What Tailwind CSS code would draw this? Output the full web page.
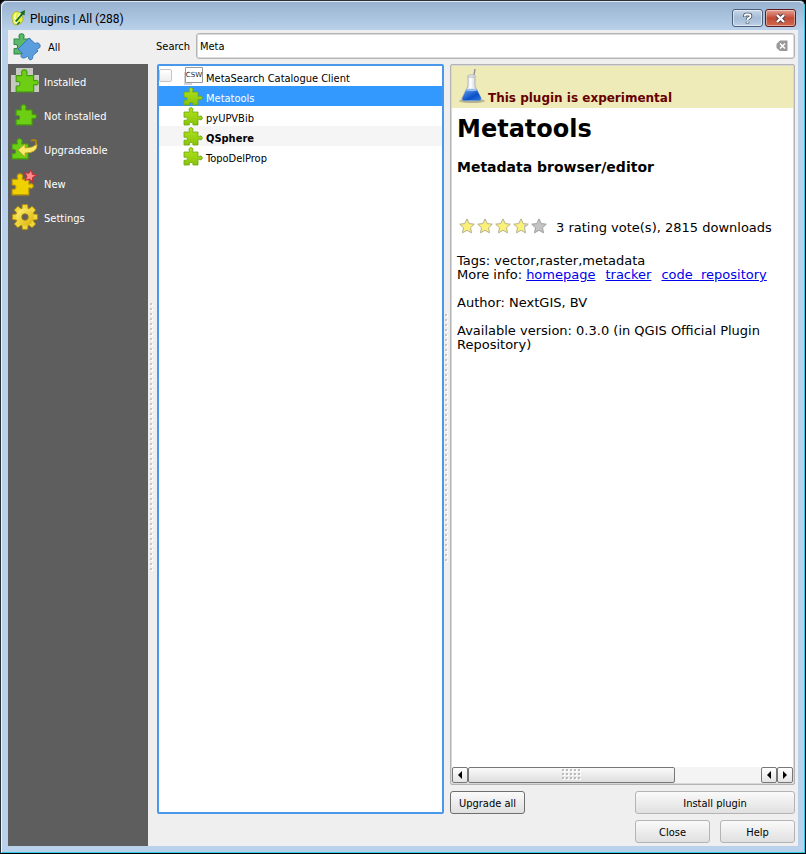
<!DOCTYPE html>
<html lang="en">
<head>
<meta charset="utf-8">
<meta name="viewport" content="width=device-width, initial-scale=1">
<title>Plugins | All (288)</title>
<script src="https://cdn.jsdelivr.net/npm/@tailwindcss/browser@4"></script>
</head>
<body class="h-screen bg-black text-black font-['DejaVu_Sans_Condensed','DejaVu_Sans',sans-serif] text-[11px] leading-4">
<!-- Shared shapes -->
<svg class="absolute size-0" aria-hidden="true">
  <defs>
    <linearGradient id="lime" x1="0" y1="0" x2="0" y2="1"><stop offset="0" stop-color="#b2e41c"/><stop offset="1" stop-color="#86c40a"/></linearGradient>
    <linearGradient id="gold" x1="0" y1="0" x2="1" y2="1"><stop offset="0" stop-color="#fff27a"/><stop offset="1" stop-color="#d9b000"/></linearGradient>
    <linearGradient id="glass" x1="0" y1="0" x2="1" y2="0"><stop offset="0" stop-color="#a9b0b4"/><stop offset=".45" stop-color="#ffffff"/><stop offset="1" stop-color="#9ea6aa"/></linearGradient>
    <linearGradient id="liquid" x1="0" y1="0" x2="1" y2="1"><stop offset="0" stop-color="#5fa0f0"/><stop offset=".6" stop-color="#0b50c8"/><stop offset="1" stop-color="#2f7be0"/></linearGradient>
    <pattern id="grip" width="4" height="5" patternUnits="userSpaceOnUse"><path d="M1 1h2v2h-2z" fill="#fff"/><path d="M0 0h2v2h-2z" fill="#c6c6c6"/></pattern>
    <pattern id="thumb" width="4" height="4" patternUnits="userSpaceOnUse"><path d="M1 1h2v2h-2z" fill="#fff"/><path d="M0 0h2v2h-2z" fill="#bbb"/></pattern>
    <path id="piece" d="M1 5H6.500C7 4 5.600 3.600 6 2C6.400 .2 9.600 .2 10 2C10.400 3.600 9 4 9.500 5H15V9.500C16 10 16.400 8.700 18 9C19.800 9.500 19.800 12.300 18 12.800C16.400 13.100 16 11.800 15 12.300V18H10C9.300 17.300 10.400 16.800 9.700 16C9 15.200 7.300 15.200 6.600 16C5.900 16.800 7 17.300 6.300 18H1V13.300C2 12.900 2.500 13.600 3.600 13.100C4.600 12.500 4.600 11 3.600 10.400C2.500 9.900 2 10.600 1 10.200Z"/>
    <path id="block" d="M1 5.500H5.500C6.500 4.800 5 4 5.500 2.200C6 .2 9.500 .2 10 2.200C10.500 4 9 4.800 10 5.500H15.500V9.500C16.300 10.200 16.800 9.300 18 9.400C19.800 9.800 19.800 12.800 18 13.200C16.800 13.400 16.300 12.500 15.500 13.200V19H1V14.300C2 13.700 2.300 14.500 3.400 14C4.500 13.200 4.500 11.200 3.400 10.600C2.300 10.100 2 10.800 1 10.400Z"/>
    <path id="star" d="M8 .9L10.200 5.600L15.300 6.200L11.500 9.700L12.500 14.800L8 12.300L3.500 14.800L4.500 9.700L.7 6.200L5.800 5.600Z"/>
    <path id="tooth" d="M-3.300 -7L-2.600 -12.600H2.600L3.300 -7Z"/>
    <symbol id="plugin" viewBox="0 0 20 19"><use href="#piece" fill="url(#lime)" stroke="#6ea40c" stroke-width=".8"/></symbol>
  </defs>
</svg>

<div class="flex h-full flex-col rounded-t-md border-t border-l border-[#2b3138] bg-[#b9d1ea] border-b border-r border-b-black border-r-black">
<div class="flex min-h-0 flex-1 flex-col rounded-t-md border border-t-[#dfe8f2] border-l-[#eef4fa] border-r-[#2fc8e8] border-b-[#2fc8e8]">
  <header class="flex h-7 shrink-0 items-center rounded-t-md bg-linear-to-b from-[#98b2d0] to-[#b9d1ea] pl-2 pr-2">
    <svg class="mt-1 size-4 shrink-0" viewBox="0 0 16 16" aria-hidden="true">
      <path d="M8 1.500C4 1.500 2 4 2 7C2 9 3 9.500 2.500 12L4 14.500C8 15.500 12 14 13 10L12.500 6Z" fill="#e3ee3e" stroke="#9aa822" stroke-width=".7"/>
      <path d="M6 3L4.500 8L7 11M10 3L6 13M4 11L8 14" fill="none" stroke="#fbffe4" stroke-width="1.200"/>
      <path d="M5 11L11.500 3.500L10 2.500L15 0L14.500 5.500L13 4.500L6.500 12Z" fill="#176b21"/>
      <path d="M7 14.500L10 12" stroke="#176b21" stroke-width="1.500"/>
    </svg>
    <h1 class="ml-1 flex-1 pt-1.5 font-[Roboto,'Open_Sans',sans-serif] text-xs">Plugins | All (288)</h1>
    <div class="flex gap-0.5 pt-1">
      <button aria-label="What's this?" class="flex h-[18px] w-[31px] items-center justify-center rounded-[3px] border border-[#4b5f78] bg-linear-to-b from-[#c8d7e8] via-[#a5bcd6] to-[#bdd1e6] inset-ring inset-ring-white/50">
        <svg class="h-[13px] w-[11px]" viewBox="0 0 11 13" aria-hidden="true"><path d="M3 5V3.500Q3 2.500 4 2.500H7Q8.500 2.500 8.500 4T7 6Q5.500 6.500 5.500 8M5.500 9.700V11.500" fill="none" stroke="#485668" stroke-width="3.600"/><path d="M3 4.500V3.500Q3 2.500 4 2.500H7Q8.500 2.500 8.500 4T7 6Q5.500 6.500 5.500 8M5.500 9.700V11" fill="none" stroke="#fff" stroke-width="1.900"/></svg>
      </button>
      <button aria-label="Close window" class="flex h-[18px] w-[31px] items-center justify-center rounded-[3px] border border-[#5b1a1c] bg-linear-to-b from-[#e3a093] via-[#c34a35] to-[#cf6a50] inset-ring inset-ring-white/40">
        <svg class="h-[11px] w-[13px]" viewBox="0 0 13 11" aria-hidden="true"><path d="M3 2L10 9M10 2L3 9" stroke="#533b40" stroke-width="4.200"/><path d="M3 2L10 9M10 2L3 9" stroke="#fff" stroke-width="2.400"/></svg>
      </button>
    </div>
  </header>

  <div class="mx-1.5 mb-1.5 flex min-h-0 flex-1 bg-[#efefef]">
    <nav class="flex w-[140px] shrink-0 flex-col text-white" aria-label="Categories">
      <a href="#all" aria-current="page" class="flex h-[34px] items-center gap-[7px] pl-[5px] text-black">
        <svg class="size-7 shrink-0" viewBox="0 0 28 28" aria-hidden="true"><g transform="translate(0 0) scale(1.100)"><use href="#block" fill="#5cb96a" stroke="#2d8a4b"/></g><path d="M16 5L21.500 10C23 11 24 9 26 10.500C28 12.500 27 15 25.500 15.500C24 16 23.500 16 24 17L25 18L20.500 22C19.500 22.500 20 24 19.500 25.500C18.500 27.500 15.500 27 15.500 25C15.500 23.500 15 23 14 23.500C12 25.500 9 25.500 8 23.500C7.500 22 9.500 21.500 9 20L5 16Z" fill="#5c9ddd" stroke="#3878b8"/></svg>
        <span class="pt-0.5">All</span>
      </a>
      <div class="flex flex-1 flex-col bg-[#5e5e5e]">
        <a href="#installed" class="flex h-[34px] items-center gap-1 pl-[3px]">
          <svg class="h-7 w-[29px] shrink-0" viewBox="0 0 29 28" aria-hidden="true"><path d="M0 8H5V1H22V8H28V25H0Z" fill="#c6c8c2"/><g transform="translate(4 2) scale(1.200)"><use href="#block" fill="#6dcf13" stroke="#459d0c"/></g></svg>
          <span class="pt-1">Installed</span>
        </a>
        <a href="#not-installed" class="flex h-[34px] items-center gap-1 pl-[3px]">
          <svg class="h-7 w-[29px] shrink-0" viewBox="0 0 29 28" aria-hidden="true"><g transform="translate(4 3) scale(1.100)"><use href="#block" fill="#6dcf13" stroke="#459d0c"/></g></svg>
          <span class="pt-1">Not installed</span>
        </a>
        <a href="#upgradeable" class="flex h-[34px] items-center gap-1 pl-[3px]">
          <svg class="h-7 w-[29px] shrink-0" viewBox="0 0 29 28" aria-hidden="true"><g transform="translate(0 3) scale(1.100)"><use href="#block" fill="#6dcf13" stroke="#459d0c"/></g><path d="M20 6Q23 4 25 6V9" fill="none" stroke="#a98412" stroke-width="2"/><path d="M7 15L14 9V13Q22 13 26 9Q27 18 14 18V22Z" fill="#fbe96a" stroke="#b99a20" stroke-width=".8"/></svg>
          <span class="pt-1">Upgradeable</span>
        </a>
        <a href="#new" class="flex h-[34px] items-center gap-1 pl-[3px]">
          <svg class="h-7 w-[29px] shrink-0" viewBox="0 0 29 28" aria-hidden="true"><g transform="translate(0 4) scale(1.150)"><use href="#block" fill="#efd000" stroke="#bd9800"/></g><g transform="translate(12 0) rotate(12 8 8) scale(.85)"><use href="#star" fill="#ff8b8b" stroke="#bf3038" stroke-width="1.300"/></g></svg>
          <span class="pt-1">New</span>
        </a>
        <a href="#settings" class="flex h-[34px] items-center gap-1 pl-[3px]">
          <svg class="h-7 w-[29px] shrink-0" viewBox="0 0 29 28" aria-hidden="true">
            <g transform="translate(14 14)" fill="#f0d63c" stroke="#a98400" stroke-width=".8">
              <use href="#tooth"/><use href="#tooth" transform="rotate(45)"/><use href="#tooth" transform="rotate(90)"/><use href="#tooth" transform="rotate(135)"/><use href="#tooth" transform="rotate(180)"/><use href="#tooth" transform="rotate(225)"/><use href="#tooth" transform="rotate(270)"/><use href="#tooth" transform="rotate(315)"/>
              <circle r="8.800" fill="url(#gold)" stroke="none"/><circle r="3.300" fill="#5e5e5e"/>
            </g>
          </svg>
          <span class="pt-1">Settings</span>
        </a>
      </div>
    </nav>

    <!-- Splitter handle -->
    <div class="flex w-2 shrink-0 items-center justify-center" aria-hidden="true">
      <svg class="h-[270px] w-1"><rect width="4" height="270" fill="url(#grip)"/></svg>
    </div>

    <main class="flex min-w-0 flex-1 flex-col pr-[3px] pt-[3px]">
      <div class="flex items-center gap-1.5">
        <label for="search" class="pt-0.5">Search</label>
        <div class="flex h-[26px] flex-1 items-center rounded-[3px] border border-[#b4b4b4] bg-white pl-[3px] pr-1.5 inset-ring inset-ring-[#dcdcdc]">
          <input id="search" type="text" value="Meta" class="min-w-0 flex-1 pt-0.5 outline-none">
          <button aria-label="Clear search">
            <svg class="h-3 w-3" viewBox="0 0 12 12" aria-hidden="true"><path d="M4 .5H11.500V11H4L.5 8V4Z" fill="#999"/><path d="M4 3.500L9 8.500M9 3.500L4 8.500" stroke="#fff" stroke-width="1.500"/></svg>
          </button>
        </div>
      </div>

      <div class="mt-[5px] flex min-h-0 flex-1">
        <ul class="mb-8 ml-px flex w-[287px] shrink-0 flex-col rounded-xs border-2 border-[#4a98ec] bg-white" aria-label="Plugins">
          <li class="flex h-5 items-center">
            <input id="csw" type="checkbox" class="mb-px size-[13px] appearance-none rounded-xs border border-[#c4c4c4] bg-linear-to-b from-white to-[#eeeeee]">
            <svg class="ml-3 h-[18px] w-5 shrink-0" viewBox="0 0 20 18" aria-hidden="true"><path d="M1 5V17H8" fill="none" stroke="#d4d4d4" stroke-width="2"/><path d="M1.500 .5H18.500V15.500H1.500Z" fill="#fff" stroke="#9a9a9a"/><text x="10" y="10" text-anchor="middle" font-family="DejaVu Sans" font-size="7" fill="#222">CSW</text></svg>
            <label for="csw" class="ml-0.5 pt-1.5">MetaSearch Catalogue Client</label>
          </li>
          <li class="flex h-5 items-center gap-[3px] bg-[#3399ff] pl-6 text-white" aria-current="true"><svg class="h-[19px] w-5 shrink-0"><use href="#plugin"/></svg><span class="pt-1.5">Metatools</span></li>
          <li class="flex h-5 items-center gap-[3px] pl-6"><svg class="h-[19px] w-5 shrink-0"><use href="#plugin"/></svg><span class="pt-1.5">pyUPVBib</span></li>
          <li class="flex h-5 items-center gap-[3px] bg-[#f5f5f5] pl-6"><svg class="h-[19px] w-5 shrink-0"><use href="#plugin"/></svg><span class="pt-1.5 font-bold">QSphere</span></li>
          <li class="flex h-5 items-center gap-[3px] pl-6"><svg class="h-[19px] w-5 shrink-0"><use href="#plugin"/></svg><span class="pt-1.5">TopoDelProp</span></li>
        </ul>

        <div class="mb-8 flex w-1.5 shrink-0 items-center justify-center" aria-hidden="true">
          <svg class="h-[250px] w-1"><rect width="4" height="250" fill="url(#grip)"/></svg>
        </div>

        <section class="flex min-w-0 flex-1 flex-col">
          <article class="flex min-h-0 flex-1 flex-col rounded-xs border border-[#b4b4b4] bg-[#d8d8d8] p-px font-['DejaVu_Sans',sans-serif] text-[13px] leading-[14px]">
            <div class="flex h-[42px] shrink-0 items-end bg-[#eeebb8] pl-[5px] font-bold text-[#660000]">
              <svg class="mb-1 h-9 w-[30px] shrink-0" viewBox="0 0 30 36" aria-hidden="true">
                <ellipse cx="15" cy="33" rx="13" ry="2" fill="#77775f" opacity=".45"/>
                <path d="M16 13L18 1" stroke="#8f979a" stroke-width="1.500"/>
                <path d="M11 8H18L18 18L24 30Q25 33 22 33H7Q4 33 5 30L11 18Z" fill="url(#glass)" stroke="#9aa1a3" stroke-width=".7"/>
                <path d="M9 22H20L24 30Q24 32.500 22 32.500H7Q5 32.500 5.500 30Z" fill="url(#liquid)"/>
                <ellipse cx="14.500" cy="22" rx="5.500" ry="1.200" fill="#8fbcf2"/>
                <ellipse cx="14.500" cy="8" rx="4" ry="1.200" fill="#e4e8ea" stroke="#9aa1a3" stroke-width=".6"/>
              </svg>
              <p class="mb-0.5 ml-px text-xs">This plugin is experimental</p>
            </div>
            <div class="min-h-0 flex-1 overflow-hidden bg-white px-[5px]">
              <h2 class="mt-[5px] text-2xl font-bold">Metatools</h2>
              <h3 class="mt-3 text-sm font-bold">Metadata browser/editor</h3>
              <div class="mt-10 flex items-center gap-2">
                <svg class="ml-px h-[18px] w-[90px] shrink-0" viewBox="0 0 90 18" role="img" aria-label="Rating: 4 of 5">
                  <g fill="#fbf07a" stroke="#b4b08c"><use href="#star" x="1" y="1"/><use href="#star" x="19" y="1"/><use href="#star" x="37" y="1"/><use href="#star" x="55" y="1"/></g>
                  <path d="M66 7.500L70 7.800L66 11L67 15L66 14Z" fill="#c4c4c4"/>
                  <use href="#star" x="73" y="1" fill="#c4c4c4" stroke="#a0a0a0"/>
                </svg>
                <span class="whitespace-nowrap pt-1">3 rating vote(s), 2815 downloads</span>
              </div>
              <p class="mt-[19px]">Tags: vector,raster,metadata</p>
              <p class="flex whitespace-nowrap">More info:<a href="#homepage" class="ml-1 text-[#0000ee] underline">homepage</a><a href="#tracker" class="ml-2.5 text-[#0000ee] underline">tracker</a><a href="#repository" class="ml-2.5 whitespace-pre text-[#0000ee] underline">code  repository</a></p>
              <p class="mt-3.5">Author: NextGIS, BV</p>
              <p class="mt-3.5">Available version: 0.3.0 (in QGIS Official Plugin Repository)</p>
            </div>
            <!-- Horizontal scroll bar -->
            <div class="flex h-4 shrink-0 bg-[#f4f4f4]">
              <button aria-label="Scroll left" class="flex w-4 items-center justify-center rounded-xs border border-[#777] bg-linear-to-b from-white to-[#e4e4e4]"><svg class="h-2 w-1" viewBox="0 0 4 8"><path d="M4 0V8L0 4Z"/></svg></button>
              <div class="flex w-[207px] shrink-0 items-center justify-center rounded-xs border border-[#777] bg-linear-to-b from-[#fafafa] to-[#dedede]">
                <svg class="h-3 w-5" aria-hidden="true"><rect width="20" height="12" fill="url(#thumb)"/></svg>
              </div>
              <div class="flex-1"></div>
              <button aria-label="Scroll left" class="flex w-4 items-center justify-center rounded-xs border border-[#777] bg-linear-to-b from-white to-[#e4e4e4]"><svg class="h-2 w-1" viewBox="0 0 4 8"><path d="M4 0V8L0 4Z"/></svg></button>
              <button aria-label="Scroll right" class="flex w-4 items-center justify-center rounded-xs border border-[#777] bg-linear-to-b from-white to-[#e4e4e4]"><svg class="h-2 w-1" viewBox="0 0 4 8"><path d="M0 0V8L4 4Z"/></svg></button>
            </div>
          </article>
          <div class="mt-1.5 flex justify-between">
            <button class="h-[23px] w-[75px] rounded-[3px] border border-[#6e6e6e] bg-linear-to-b from-[#fafafa] to-[#e0e0e0] pt-0.5">Upgrade all</button>
            <button class="h-[23px] w-40 rounded-[3px] border border-[#b4b4b4] bg-linear-to-b from-[#fafafa] to-[#e0e0e0] pt-0.5">Install plugin</button>
          </div>
          <div class="mb-[3px] mt-1.5 flex justify-end gap-2.5">
            <button class="h-[23px] w-[75px] rounded-[3px] border border-[#b4b4b4] bg-linear-to-b from-[#fafafa] to-[#e0e0e0] pt-0.5">Close</button>
            <button class="h-[23px] w-[75px] rounded-[3px] border border-[#b4b4b4] bg-linear-to-b from-[#fafafa] to-[#e0e0e0] pt-0.5">Help</button>
          </div>
        </section>
      </div>
    </main>
  </div>
</div>
</div>
</body>
</html>
